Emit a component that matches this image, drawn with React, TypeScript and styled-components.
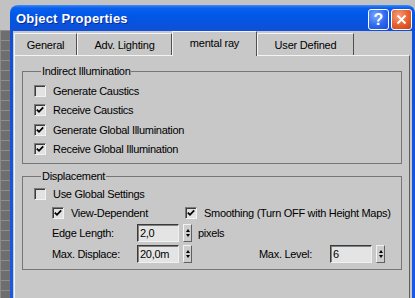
import styled, { createGlobalStyle } from 'styled-components';

const GlobalStyle = createGlobalStyle`
  body {
    margin: 0;
    background: #c8c8c8;
    font-family: 'Liberation Sans', Arial, sans-serif;
  }
`;

const Desktop = styled.div`
  width: 415px;
  height: 298px;
  overflow: hidden;
  box-sizing: border-box;
  padding: 5px 0 0 10px;
  background:
    linear-gradient(to bottom, #c2c2c2 0, #c2c2c2 30px, transparent 30px),
    repeating-linear-gradient(to bottom, #8c8c8c 0, #8c8c8c 1px, transparent 1px, transparent 10px),
    repeating-linear-gradient(to right, #8c8c8c 0, #8c8c8c 1px, transparent 1px, transparent 10px),
    #6e6e6e;
`;

const Window = styled.div`
  width: 405px;
  height: 293px;
  box-sizing: border-box;
  padding: 0 3px;
  border-radius: 8px 8px 0 0;
  background: linear-gradient(
    to bottom,
    #3f8cf6 0,
    #0a5fee 3px,
    #0058e8 10px,
    #0a52dc 20px,
    #1050d8 26px,
    #1a58e6 100%
  );
  display: flex;
  flex-direction: column;
`;

const TitleBar = styled.div`
  height: 26px;
  display: flex;
  align-items: center;
  justify-content: space-between;
  padding-left: 3px;
`;

const Title = styled.span`
  color: #fff;
  font-size: 13px;
  font-weight: bold;
  letter-spacing: 0.2px;
  text-shadow: 1px 1px 0 #0c2c9a;
`;

const Buttons = styled.div`
  display: flex;
  gap: 2px;
  align-self: flex-end;
  margin-bottom: 1px;
`;

const CaptionButton = styled.div<{ $red?: boolean }>`
  width: 21px;
  height: 21px;
  box-sizing: border-box;
  border: 1px solid #fff;
  border-radius: 3px;
  display: flex;
  align-items: center;
  justify-content: center;
  color: #fff;
  font-weight: bold;
  font-size: 16px;
  background: ${(p) =>
    p.$red
      ? 'radial-gradient(circle at 35% 30%, #f89a78 0, #e4602e 55%, #c8401a 100%)'
      : 'radial-gradient(circle at 35% 30%, #7aa8ff 0, #2d68f0 55%, #1a4ad0 100%)'};
`;

const Body = styled.div`
  flex: 1;
  background: #c8c8c8;
  padding-top: 2px;
  display: flex;
  flex-direction: column;
`;

const TabStrip = styled.div`
  display: flex;
  align-items: flex-end;
  padding-left: 1px;
  height: 22px;
  position: relative;
  z-index: 1;
`;

const Tab = styled.div<{ $w: number; $active?: boolean }>`
  width: ${(p) => p.$w}px;
  height: ${(p) => (p.$active ? 25 : 22)}px;
  margin-bottom: ${(p) => (p.$active ? -1 : 0)}px;
  box-sizing: border-box;
  border-top: 1px solid #f4f4f4;
  border-left: 1px solid #f4f4f4;
  border-right: 1px solid #505050;
  background: #c8c8c8;
  display: flex;
  align-items: center;
  justify-content: center;
  padding-top: ${(p) => (p.$active ? 0 : 1)}px;
  padding-bottom: ${(p) => (p.$active ? 2 : 0)}px;
  font-size: 11px;
  letter-spacing: -0.2px;
  color: #000;
`;

const Panel = styled.div`
  flex: 1;
  margin: 0 2px 0 1px;
  border-top: 1px solid #f4f4f4;
  border-left: 1px solid #f4f4f4;
  border-right: 1px solid #606060;
  padding: 9px 7px 0 7px;
  display: flex;
  flex-direction: column;
  gap: 6px;
`;

const Group = styled.fieldset<{ $top: number; $bottom: number }>`
  margin: 0;
  border: 1px solid #767676;
  padding: ${(p) => p.$top}px 10px ${(p) => p.$bottom}px 11px;
  min-width: 0;
`;

const Legend = styled.legend`
  font-size: 11px;
  letter-spacing: -0.3px;
  line-height: 12px;
  padding: 0 1px;
  margin-left: 7px;
  color: #000;
`;

const Row = styled.div<{ $h: number; $indent?: number }>`
  height: ${(p) => p.$h}px;
  display: flex;
  align-items: center;
  padding-left: ${(p) => p.$indent ?? 0}px;
  font-size: 11px;
  letter-spacing: -0.3px;
  color: #000;
`;

const CheckItem = styled.label<{ $w?: number }>`
  display: flex;
  align-items: center;
  gap: 7px;
  width: ${(p) => (p.$w ? `${p.$w}px` : 'auto')};
`;

const Box = styled.span`
  width: 12px;
  height: 12px;
  box-sizing: border-box;
  border-top: 1px solid #7a7a7a;
  border-left: 1px solid #7a7a7a;
  border-right: 1px solid #f2f2f2;
  border-bottom: 1px solid #f2f2f2;
  box-shadow: inset 1px 1px 0 #3c3c3c;
  background: #e2e2e2;
  display: flex;
  align-items: center;
  justify-content: center;
  flex-shrink: 0;
`;

const FieldLabel = styled.span<{ $w: number; $ml?: number }>`
  width: ${(p) => p.$w}px;
  margin-left: ${(p) => p.$ml ?? 0}px;
`;

const Input = styled.input`
  width: 42px;
  height: 18px;
  box-sizing: border-box;
  margin: 0;
  padding: 0 0 0 2px;
  border: 1px solid;
  border-color: #3a3a3a #f0f0f0 #f0f0f0 #3a3a3a;
  box-shadow: inset 1px 1px 0 #808080;
  background: #e4e4e4;
  font-family: 'Liberation Sans', Arial, sans-serif;
  font-size: 11px;
  letter-spacing: -0.3px;
  color: #000;
  outline: none;
`;

const Spinner = styled.div`
  width: 9px;
  height: 18px;
  margin-left: 4px;
  box-sizing: border-box;
  border: 1px solid;
  border-color: #f2f2f2 #606060 #606060 #f2f2f2;
  background: #cdcdcd;
  display: flex;
  flex-direction: column;
  align-items: center;
  justify-content: center;
  gap: 2px;
`;

const Arrow = styled.span<{ $down?: boolean }>`
  width: 0;
  height: 0;
  border-left: 2.5px solid transparent;
  border-right: 2.5px solid transparent;
  ${(p) => (p.$down ? 'border-top: 3px solid #000;' : 'border-bottom: 3px solid #000;')}
`;

const Unit = styled.span`
  margin-left: 6px;
`;

const Check = () => (
  <svg width="8" height="8" viewBox="0 0 8 8">
    <polyline points="0.8,3.6 3,5.8 7.2,1.4" fill="none" stroke="#000" strokeWidth="1.8" />
  </svg>
);

const CheckBox = ({ label, checked, w }: { label: string; checked?: boolean; w?: number }) => (
  <CheckItem $w={w}>
    <Box>{checked && <Check />}</Box>
    {label}
  </CheckItem>
);

const Spin = () => (
  <Spinner>
    <Arrow />
    <Arrow $down />
  </Spinner>
);

const tabs = [
  { name: 'General', w: 63 },
  { name: 'Adv. Lighting', w: 95 },
  { name: 'mental ray', w: 85, active: true },
  { name: 'User Defined', w: 97 },
];

export default function App() {
  return (
    <Desktop>
      <GlobalStyle />
      <Window>
        <TitleBar>
          <Title>Object Properties</Title>
          <Buttons>
            <CaptionButton>?</CaptionButton>
            <CaptionButton $red>
              <svg width="11" height="11" viewBox="0 0 11 11">
                <path d="M1.5 1.5 L9.5 9.5 M9.5 1.5 L1.5 9.5" stroke="#fff" strokeWidth="2" />
              </svg>
            </CaptionButton>
          </Buttons>
        </TitleBar>
        <Body>
          <TabStrip>
            {tabs.map((t) => (
              <Tab key={t.name} $w={t.w} $active={t.active}>
                {t.name}
              </Tab>
            ))}
          </TabStrip>
          <Panel>
            <Group $top={4} $bottom={4}>
              <Legend>Indirect Illumination</Legend>
              <Row $h={19.5}>
                <CheckBox label="Generate Caustics" />
              </Row>
              <Row $h={19.5}>
                <CheckBox label="Receive Caustics" checked />
              </Row>
              <Row $h={19.5}>
                <CheckBox label="Generate Global Illumination" checked />
              </Row>
              <Row $h={19.5}>
                <CheckBox label="Receive Global Illumination" checked />
              </Row>
            </Group>
            <Group $top={2} $bottom={5}>
              <Legend>Displacement</Legend>
              <Row $h={19}>
                <CheckBox label="Use Global Settings" />
              </Row>
              <Row $h={19} $indent={18}>
                <CheckBox label="View-Dependent" checked w={133} />
                <CheckBox label="Smoothing (Turn OFF with Height Maps)" checked />
              </Row>
              <Row $h={21} $indent={18}>
                <FieldLabel $w={85}>Edge Length:</FieldLabel>
                <Input readOnly defaultValue="2,0" />
                <Spin />
                <Unit>pixels</Unit>
              </Row>
              <Row $h={21} $indent={18}>
                <FieldLabel $w={85}>Max. Displace:</FieldLabel>
                <Input readOnly defaultValue="20,0m" />
                <Spin />
                <FieldLabel $w={71} $ml={67}>
                  Max. Level:
                </FieldLabel>
                <Input readOnly defaultValue="6" />
                <Spin />
              </Row>
            </Group>
          </Panel>
        </Body>
      </Window>
    </Desktop>
  );
}
